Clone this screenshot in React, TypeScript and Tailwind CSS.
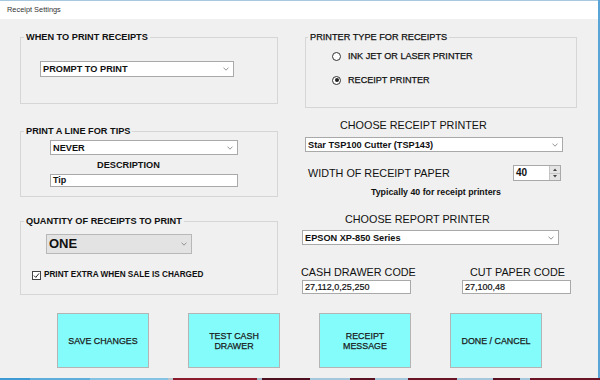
import React from "react";

const Chev = () => (
  <svg width="6" height="4" viewBox="0 0 6 4" className="shrink-0">
    <polyline points="0.5,0.6 3,3.2 5.5,0.6" fill="none" stroke="#8a8a8a" strokeWidth="0.9" />
  </svg>
);

const Select = ({ text, className }: { text: string; className: string }) => (
  <div className={`flex items-center justify-between bg-white border border-[#a9a9a9] pl-[2px] pr-[4px] text-[9.2px] font-bold leading-[12px] text-[#111] ${className}`}>
    <span className="whitespace-nowrap">{text}</span>
    <Chev />
  </div>
);

const Radio = ({ checked, label, className }: { checked?: boolean; label: string; className: string }) => (
  <div className={`flex items-center h-[12px] ${className}`}>
    <div className="w-[9px] h-[9px] rounded-full border border-[#333] bg-white flex items-center justify-center">
      {checked && <div className="w-[4px] h-[4px] rounded-full bg-[#222]" />}
    </div>
    <span className="ml-[7px] text-[9.1px] leading-[12px] text-[#111] whitespace-nowrap [-webkit-text-stroke:0.25px]">{label}</span>
  </div>
);

const buttons = ["SAVE CHANGES", "TEST CASH\nDRAWER", "RECEIPT\nMESSAGE", "DONE / CANCEL"];

const strip: [number, string][] = [
  [30, "#3d9ad3"],
  [60, "#5eaedb"],
  [78, "#84c3e4"],
  [5, "#b8c4cc"],
  [84, "#8a1b2c"],
  [5, "#9fb8c8"],
  [48, "#4d1020"],
  [40, "#a6c8dc"],
  [25, "#5a1222"],
  [33, "#a6c8dc"],
  [49, "#6a1426"],
  [36, "#a6c8dc"],
  [27, "#5a1222"],
  [10, "#a6c8dc"],
  [70, "#6a1426"],
];

export default function App() {
  return (
    <div className="w-[600px] h-[380px] flex flex-col bg-[#f0f0f0] overflow-hidden font-['Liberation_Sans',Arial,sans-serif] text-[#111]">
      <div className="h-[378px] flex flex-col border-r-2 border-[#5aa5d8]">
        {/* title bar */}
        <div className="h-[19px] shrink-0 bg-white border-t border-[#a7c9e0] flex items-center pl-[7px] text-[7.4px] text-[#333]">
          Receipt Settings
        </div>

        {/* top area */}
        <div className="h-[277px] shrink-0 flex items-start">
          {/* left column */}
          <div className="ml-[20px] w-[258px] flex flex-col">
            <fieldset className="mt-[12px] h-[73px] border border-[#d6d6d6]">
              <legend className="ml-[3px] px-[2px] text-[9.2px] font-bold leading-[12px]">WHEN TO PRINT RECEIPTS</legend>
              <Select text="PROMPT TO PRINT" className="mt-[18px] ml-[19px] w-[194px] h-[16px]" />
            </fieldset>

            <fieldset className="mt-[21px] h-[72px] border border-[#d6d6d6]">
              <legend className="ml-[3px] px-[2px] text-[9.2px] font-bold leading-[12px]">PRINT A LINE FOR TIPS</legend>
              <Select text="NEVER" className="mt-[3px] ml-[29px] w-[188px] h-[15px]" />
              <div className="mt-[4px] ml-[76px] text-[9.2px] font-bold leading-[12px]">DESCRIPTION</div>
              <div className="mt-[3px] ml-[29px] w-[188px] h-[13px] bg-white border border-[#a9a9a9] pl-[2px] text-[9px] font-bold leading-[11px]">
                Tip
              </div>
            </fieldset>

            <fieldset className="mt-[18px] h-[80px] border border-[#d6d6d6]">
              <legend className="ml-[3px] px-[2px] text-[9.2px] font-bold leading-[12px]">QUANTITY OF RECEIPTS TO PRINT</legend>
              <div className="mt-[7px] ml-[25px] w-[146px] h-[20px] flex items-center justify-between bg-[#e3e3e3] border border-[#b8b8b8] pl-[2px] pr-[4px]">
                <span className="text-[13px] leading-[16px] font-bold text-[#111]">ONE</span>
                <Chev />
              </div>
              <div className="mt-[15px] ml-[11px] flex items-center h-[12px]">
                <div className="w-[9px] h-[9px] border border-[#444] bg-white flex items-center justify-center">
                  <svg width="7" height="7" viewBox="0 0 7 7">
                    <polyline points="1,3.6 2.8,5.4 6,1.4" fill="none" stroke="#222" strokeWidth="1" />
                  </svg>
                </div>
                <span className="ml-[3px] text-[8.2px] font-bold leading-[12px] whitespace-nowrap">PRINT EXTRA WHEN SALE IS CHARGED</span>
              </div>
            </fieldset>
          </div>

          {/* right column */}
          <div className="ml-[23px] w-[276px] flex flex-col">
            <fieldset className="mt-[12px] ml-[4px] w-[272px] h-[77px] border border-[#d6d6d6]">
              <legend className="ml-[2px] px-[2px] text-[9.2px] leading-[12px] [-webkit-text-stroke:0.25px]">PRINTER TYPE FOR RECEIPTS</legend>
              <Radio label="INK JET OR LASER PRINTER" className="mt-[7px] ml-[26px]" />
              <Radio checked label="RECEIPT PRINTER" className="mt-[12px] ml-[26px]" />
            </fieldset>

            <div className="mt-[10px] ml-[39px] text-[10.8px] leading-[14px] whitespace-nowrap">CHOOSE RECEIPT PRINTER</div>
            <Select text="Star TSP100 Cutter (TSP143)" className="mt-[5px] ml-[4px] w-[258px] h-[15px]" />

            <div className="mt-[13px] flex items-center h-[16px]">
              <div className="ml-[7px] w-[205px] text-[10.8px] leading-[14px] whitespace-nowrap">WIDTH OF RECEIPT PAPER</div>
              <div className="flex h-[16px] w-[48px] border border-[#a9a9a9] bg-white">
                <div className="flex-1 pl-[2px] text-[10px] font-bold leading-[14px]">40</div>
                <div className="w-[11px] flex flex-col bg-[#e4e4e4] border-l border-[#c4c4c4]">
                  <div className="flex-1 flex items-center justify-center border-b border-[#c4c4c4]">
                    <svg width="4" height="3" viewBox="0 0 4 3"><polygon points="0,3 2,0.5 4,3" fill="#444" /></svg>
                  </div>
                  <div className="flex-1 flex items-center justify-center">
                    <svg width="4" height="3" viewBox="0 0 4 3"><polygon points="0,0 4,0 2,2.5" fill="#444" /></svg>
                  </div>
                </div>
              </div>
            </div>

            <div className="mt-[5px] ml-[70px] text-[8.8px] font-bold leading-[13px] whitespace-nowrap">Typically 40 for receipt printers</div>

            <div className="mt-[13px] ml-[44px] text-[10.8px] leading-[14px] whitespace-nowrap">CHOOSE REPORT PRINTER</div>
            <Select text="EPSON XP-850 Series" className="mt-[4px] ml-[1px] w-[257px] h-[15px]" />

            <div className="mt-[20px] flex h-[14px] text-[10.8px] leading-[14px] whitespace-nowrap">
              <div className="w-[169px]">CASH DRAWER CODE</div>
              <div>CUT PAPER CODE</div>
            </div>
            <div className="mt-[1px] flex">
              <div className="ml-[1px] w-[109px] h-[14px] bg-white border border-[#a9a9a9] pl-[2px] text-[9px] leading-[12px] [-webkit-text-stroke:0.2px]">
                27,112,0,25,250
              </div>
              <div className="ml-[51px] w-[109px] h-[14px] bg-white border border-[#a9a9a9] pl-[2px] text-[9px] leading-[12px] [-webkit-text-stroke:0.2px]">
                27,100,48
              </div>
            </div>
          </div>
        </div>

        {/* buttons */}
        <div className="mt-[17px] ml-[57px] flex gap-[39px]">
          {buttons.map((b) => (
            <div
              key={b}
              className="w-[92px] h-[55px] bg-[#84fcfc] border border-[#b4b4b4] flex items-center justify-center text-center whitespace-pre-line text-[8.9px] leading-[10px] text-[#1a1a1a] [-webkit-text-stroke:0.25px]"
            >
              {b}
            </div>
          ))}
        </div>
      </div>

      {/* taskbar strip */}
      <div className="h-[2px] flex">
        {strip.map(([w, c], i) => (
          <div key={i} style={{ width: w, backgroundColor: c }} />
        ))}
      </div>
    </div>
  );
}
